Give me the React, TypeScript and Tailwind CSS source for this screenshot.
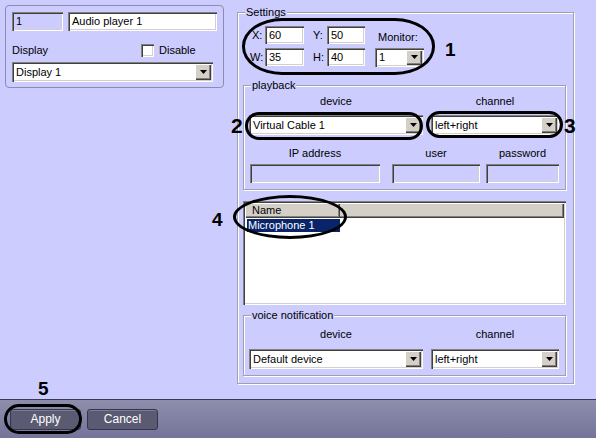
import React from "react";

// classic win32 bevels
const sunken =
  "shadow-[inset_1px_1px_0_#808080,inset_2px_2px_0_#404040,inset_-1px_-1px_0_#ffffff,inset_-2px_-2px_0_#d4d0c8]";
const raised =
  "shadow-[inset_1px_1px_0_#ffffff,inset_-1px_-1px_0_#404040,inset_-2px_-2px_0_#808080]";
const etched = "border border-[#a0a0a8] shadow-[1px_1px_0_#ffffff,inset_1px_1px_0_#ffffff]";

const Edit = ({ value = "", className = "", white = false }: { value?: string; className?: string; white?: boolean }) => (
  <div className={`flex items-center pl-[4px] ${white ? "bg-white" : ""} ${sunken} ${className}`}>
    <span className="whitespace-nowrap">{value}</span>
  </div>
);

const Combo = ({ value, className = "" }: { value: string; className?: string }) => (
  <div className={`flex items-center bg-white p-[2px] ${sunken} ${className}`}>
    <span className="flex-1 whitespace-nowrap pl-[2px]">{value}</span>
    <div className={`flex h-full w-[16px] items-center justify-center bg-[#d4d0c8] ${raised}`}>
      <svg width="7" height="4" viewBox="0 0 7 4">
        <path d="M0 0h7L3.5 4z" fill="#000" />
      </svg>
    </div>
  </div>
);

const GroupBox = ({ title, className = "", children }: { title: string; className?: string; children?: React.ReactNode }) => (
  <div className={`relative ${etched} ${className}`}>
    <span className="absolute -top-[7px] left-[7px] bg-[#ccccff] px-[1px] whitespace-nowrap">{title}</span>
    {children}
  </div>
);

const LeftPanel = () => (
  <div className="ml-[5px] mt-[5px] h-[83px] w-[219px] shrink-0 rounded-[4px] border border-[#8c8cae] px-[6px] pt-[6px]">
    <div className="flex gap-[5px]">
      <Edit value="1" className="h-[19px] w-[51px]" />
      <Edit value="Audio player 1" white className="h-[19px] w-[149px]" />
    </div>
    <div className="mt-[13px] flex h-[13px] items-center">
      <span className="w-[129px]">Display</span>
      <div className={`h-[13px] w-[13px] bg-white ${sunken}`} />
      <span className="ml-[5px]">Disable</span>
    </div>
    <Combo value="Display 1" className="mt-[5px] h-[20px] w-[201px]" />
  </div>
);

const Settings = () => (
  <GroupBox title="Settings" className="ml-[13px] mt-[12px] h-[372px] w-[337px] shrink-0">
    <div className="pt-[13px]">
      <div className="flex h-[18px] items-center pl-[14px]">
        <span className="w-[13px]">X:</span>
        <Edit value="60" white className="h-[18px] w-[39px]" />
        <span className="ml-[9px] w-[14px]">Y:</span>
        <Edit value="50" white className="h-[18px] w-[38px]" />
        <span className="ml-[13px] self-end">Monitor:</span>
      </div>
      <div className="mt-[4px] flex h-[18px] items-center pl-[12px]">
        <span className="w-[15px]">W:</span>
        <Edit value="35" white className="h-[18px] w-[39px]" />
        <span className="ml-[9px] w-[14px]">H:</span>
        <Edit value="40" white className="h-[18px] w-[38px]" />
        <Combo value="1" className="ml-[10px] h-[19px] w-[49px]" />
      </div>
    </div>

    <GroupBox title="playback" className="ml-[5px] mt-[19px] h-[105px] w-[323px]">
      <div className="flex pl-[5px] pt-[9px]">
        <span className="w-[174px] text-center">device</span>
        <span className="ml-[8px] w-[128px] text-center">channel</span>
      </div>
      <div className="mt-[7px] flex pl-[5px]">
        <Combo value="Virtual Cable 1" className="h-[20px] w-[174px]" />
        <Combo value="left+right" className="ml-[8px] h-[20px] w-[128px]" />
      </div>
      <div className="mt-[12px] flex pl-[6px]">
        <span className="w-[130px] text-center">IP address</span>
        <span className="ml-[12px] w-[88px] text-center">user</span>
        <span className="ml-[6px] w-[73px] text-center">password</span>
      </div>
      <div className="mt-[4px] flex pl-[6px]">
        <Edit className="h-[19px] w-[130px]" />
        <Edit className="ml-[12px] h-[19px] w-[88px]" />
        <Edit className="ml-[6px] h-[19px] w-[73px]" />
      </div>
    </GroupBox>

    <div className={`ml-[5px] mt-[11px] h-[104px] w-[323px] bg-white p-[2px] ${sunken}`}>
      <div className={`flex h-[15px] bg-[#d4d0c8] ${raised}`}>
        <div className={`flex w-[95px] items-center pl-[7px] ${raised}`}>Name</div>
      </div>
      <div className="ml-[2px] mt-[1px] flex h-[13px] w-[93px] items-center bg-[#0a246a] pl-[1px] text-white">
        Microphone 1
      </div>
    </div>

    <GroupBox title="voice notification" className="ml-[5px] mt-[10px] h-[61px] w-[323px]">
      <div className="flex pl-[5px] pt-[12px]">
        <span className="w-[174px] text-center">device</span>
        <span className="ml-[8px] w-[128px] text-center">channel</span>
      </div>
      <div className="mt-[8px] flex pl-[5px]">
        <Combo value="Default device" className="h-[20px] w-[174px]" />
        <Combo value="left+right" className="ml-[8px] h-[20px] w-[128px]" />
      </div>
    </GroupBox>
  </GroupBox>
);

const BarButton = ({ label, className = "" }: { label: string; className?: string }) => (
  <button className={`flex h-[21px] w-[71px] items-center justify-center rounded-[3px] border border-[#34344a] bg-[#5a5a72] text-[12px] text-white shadow-[inset_0_1px_0_#7c7c94] ${className}`}>
    {label}
  </button>
);

const mark = "pointer-events-none absolute border-[3px] border-black";
const num = "pointer-events-none absolute font-bold leading-[19px] text-[19px] text-black";

export default function App() {
  return (
    <div className="relative flex h-[438px] w-[596px] flex-col overflow-hidden bg-[#ccccff] font-['Liberation_Sans',Arial,sans-serif] text-[11px] leading-[13px] text-black">
      <div className="flex h-[399px] items-start">
        <LeftPanel />
        <Settings />
      </div>
      <div className="flex h-[39px] border-t border-[#3a3a52] bg-linear-to-b from-[#8e8eac] to-[#74749a] pl-[10px] pt-[9px]">
        <BarButton label="Apply" />
        <BarButton label="Cancel" className="ml-[6px]" />
      </div>

      {/* callouts */}
      <div className={`${mark} left-[242px] top-[18px] h-[57px] w-[193px] rounded-[40px/28px]`} />
      <div className={`${mark} left-[245px] top-[112px] h-[28px] w-[178px] rounded-full`} />
      <div className={`${mark} left-[426px] top-[111px] h-[27px] w-[137px] rounded-full`} />
      <div className={`${mark} left-[233px] top-[195px] h-[44px] w-[114px] rounded-[50%]`} />
      <div className={`${mark} left-[4px] top-[404px] h-[30px] w-[78px] rounded-full`} />
      <span className={`${num} left-[445px] top-[40px]`}>1</span>
      <span className={`${num} left-[231px] top-[116px] text-[21px]`}>2</span>
      <span className={`${num} left-[564px] top-[116px] text-[21px]`}>3</span>
      <span className={`${num} left-[212px] top-[210px]`}>4</span>
      <span className={`${num} left-[38px] top-[379px]`}>5</span>
    </div>
  );
}
